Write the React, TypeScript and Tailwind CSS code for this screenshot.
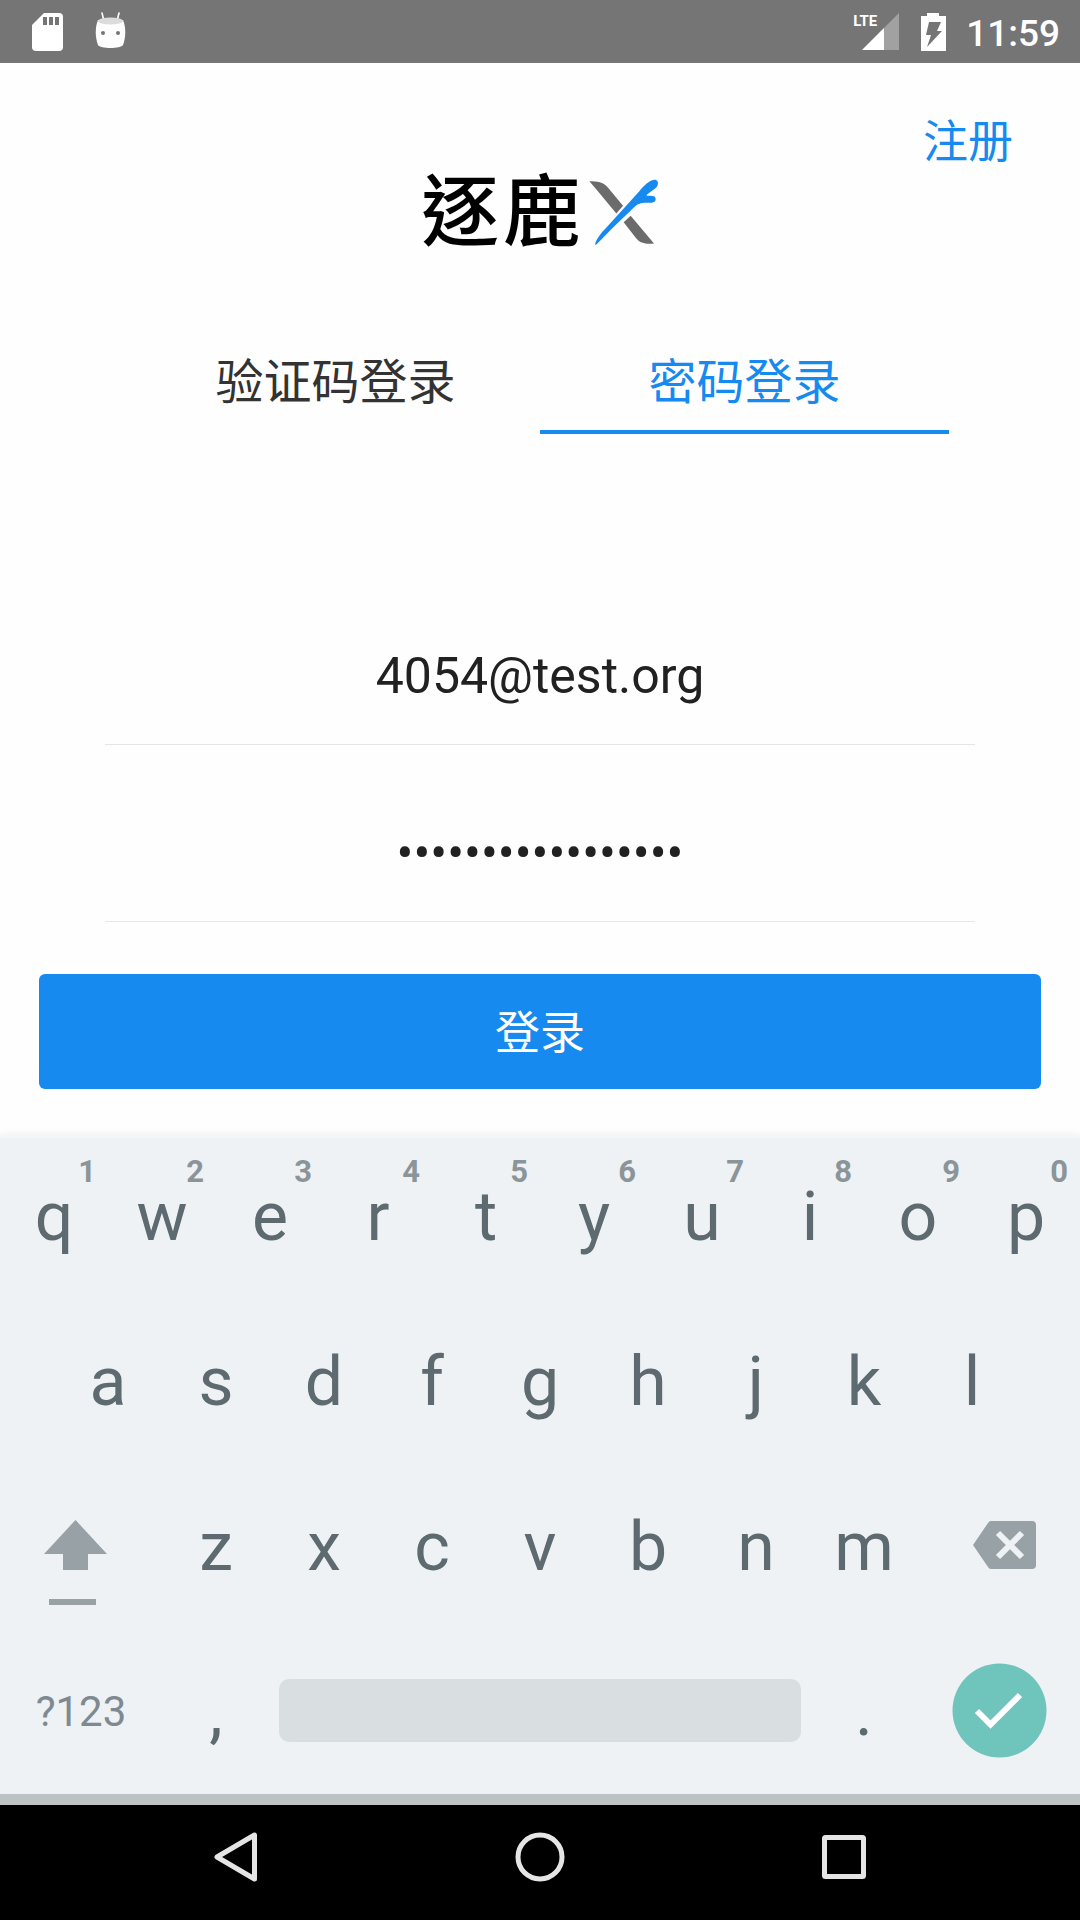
import React, { useState } from "react";

const cjk = "font-['Noto_Sans_CJK_SC',sans-serif]";

function StatusBar() {
  return (
    <header className="flex h-[63px] items-center justify-between bg-[#757575] pr-5 pl-8 text-white">
      <div className="flex items-center gap-8">
        <svg className="h-[38px] w-[31px]" viewBox="0 0 31 38" aria-label="SD card">
          <path fill="currentColor" d="M12 0h15a4 4 0 0 1 4 4v30a4 4 0 0 1-4 4H4a4 4 0 0 1-4-4V12z" />
          <path fill="#757575" d="M11 4h4v8h-4zM17 4h4v8h-4zM23 4h4v8h-4z" />
        </svg>
        <svg className="mb-1 h-9 w-[31px]" viewBox="0 0 31 36" aria-label="Android">
          <path stroke="currentColor" strokeWidth="1.6" strokeLinecap="round" d="M7 1l2 8M24 1l-2 8" />
          <path fill="currentColor" d="M3 8C0 15 0 25 3 33c2 4 23 4 25 0 3-8 3-18 0-25z" />
          <ellipse fill="#dcdcdc" cx="15.500" cy="9" rx="12.500" ry="3.500" />
          <circle fill="#757575" cx="8" cy="21" r="2" />
          <circle fill="#757575" cx="23" cy="21" r="2" />
        </svg>
      </div>
      <div className="flex items-center">
        <div className="relative h-[37px] w-[46px]">
          <svg className="absolute right-0 bottom-0 h-[37px] w-[37px]" viewBox="0 0 37 37" aria-label="Signal">
            <path fill="#a1a1a1" d="M37 0v37H0z" />
            <path fill="currentColor" d="M22 15v22H0z" />
          </svg>
          <span className="absolute top-0 left-0 text-[15px] leading-4 font-bold">LTE</span>
        </div>
        <svg className="ml-[22px] h-[38px] w-[25px]" viewBox="0 0 25 38" aria-label="Battery charging">
          <path fill="currentColor" d="M6 0h12v3h7v35H0V3h6z" />
          <path fill="#757575" d="M8 9h12l-4 9h5L6 34l4-12H5z" />
        </svg>
        <time className="mt-1 ml-5 text-[37px] leading-[44px] font-medium">11:59</time>
      </div>
    </header>
  );
}

function Logo() {
  return (
    <h1 className="flex items-center justify-center text-black">
      <span className="flex gap-1 font-['Noto_Sans_CJK_TC',sans-serif] text-[78px] leading-[80px] font-medium">
        <span>逐</span>
        <span>鹿</span>
      </span>
      <svg className="mt-[14px] ml-2 h-[67px] w-[70px]" viewBox="567 88 210 200" aria-label="X">
        <path fill="#6b6b6b" d="M568 94C592 94 609 96 623 112L669 168 649 191 590 120zM692 198L762 281C738 283 721 281 709 266L671 217z" />
        <path fill="#178aef" d="M585 284C588 270 600 252 620 232L718 124C732 107 748 92 762 90 772 89 776 97 773 106 768 118 750 124 739 137 750 140 768 134 767 148 766 160 752 159 738 159 722 159 714 162 704 171L640 232C622 250 600 273 588 285z" />
      </svg>
    </h1>
  );
}

const tabs = ["验证码登录", "密码登录"];

function LoginForm() {
  const [active, setActive] = useState(1);
  return (
    <main className="flex flex-1 flex-col pb-[46px]">
      <nav className="flex justify-end px-[67px] pt-[50px]">
        <a href="#register" className={`${cjk} text-[45px] leading-[52px] text-[#178aef]`}>注册</a>
      </nav>
      <Logo />
      <div role="tablist" className="mx-[131px] mt-[84px] grid grid-cols-2">
        {tabs.map((label, i) => (
          <button
            key={label}
            role="tab"
            aria-selected={i === active}
            onClick={() => setActive(i)}
            className={`${cjk} border-b-4 pt-4 pb-5 text-[48px] leading-[64px] ${
              i === active ? "border-[#178aef] text-[#178aef]" : "border-transparent text-[#333]"
            }`}
          >
            {label}
          </button>
        ))}
      </div>
      <form className="mt-auto flex flex-col px-[39px]" onSubmit={(e) => e.preventDefault()}>
        <div className="mx-[66px] flex flex-col gap-[39px] text-[50px] text-[#212121]">
          <input
            aria-label="账号"
            type="text"
            defaultValue="4054@test.org"
            className="h-[138px] w-full border-b border-[#e5e5e5] bg-transparent text-center outline-none"
          />
          <input
            aria-label="密码"
            type="password"
            defaultValue="abcdefghijklmnopq"
            className="h-[138px] w-full border-b border-[#e5e5e5] bg-transparent text-center outline-none"
          />
        </div>
        <button type="submit" className={`${cjk} mt-[52px] h-[115px] rounded-md bg-[#178aef] pb-1 text-[45px] text-white`}>
          登录
        </button>
      </form>
    </main>
  );
}

function Key({ label, hint, className = "col-span-2" }: { label: string; hint?: string; className?: string }) {
  return (
    <button type="button" className={`relative flex items-center justify-center ${className}`}>
      {label}
      {hint && (
        <span className="absolute top-[19px] right-3 text-[31px] leading-9 font-bold text-[#8b9599]">{hint}</span>
      )}
    </button>
  );
}

function Keyboard() {
  return (
    <section
      aria-label="Keyboard"
      className="grid h-[659px] grid-cols-20 grid-rows-4 bg-[#eef2f5] text-[68px] leading-20 text-[#5d6a6f] shadow-[0_0_8px_rgba(0,0,0,0.08),inset_0_3px_0_#f5f6f7]"
    >
      {"qwertyuiop".split("").map((k, i) => (
        <Key key={k} label={k} hint={String((i + 1) % 10)} />
      ))}
      {"asdfghjkl".split("").map((k) => (
        <Key key={k} label={k} className={k === "a" ? "col-span-2 col-start-2" : "col-span-2"} />
      ))}
      <button type="button" aria-label="Shift" className="col-span-3 col-start-1 flex items-center justify-start pl-11">
        <svg className="mt-8 h-[85px] w-[63px]" viewBox="0 0 63 85">
          <path fill="#98a1a6" d="M31.500 0L63 34H44v16H19V34H0zM5 79h47v6H5z" />
        </svg>
      </button>
      {"zxcvbnm".split("").map((k) => (
        <Key key={k} label={k} />
      ))}
      <button type="button" aria-label="Backspace" className="col-span-3 flex items-center justify-end pr-11 pb-1">
        <svg className="h-12 w-[63px]" viewBox="0 0 63 48">
          <path fill="#98a1a6" d="M18 0h41a4 4 0 0 1 4 4v40a4 4 0 0 1-4 4H18a4 4 0 0 1-3-2L0 24 15 2a4 4 0 0 1 3-2z" />
          <path stroke="#eef2f5" strokeWidth="6" d="M25 12l24 24M49 12L25 36" />
        </svg>
      </button>
      <button type="button" className="col-span-3 text-[42px] text-[#7e8a8f]">?123</button>
      <Key label="," />
      <button type="button" aria-label="Space" className="col-span-10 flex items-center px-[9px] pb-0.5">
        <span className="h-[63px] w-full rounded-[10px] bg-[#d9dee1]" />
      </button>
      <Key label="." />
      <button type="button" aria-label="Done" className="col-span-3 flex items-center justify-center pb-0.5">
        <svg className="h-[95px] w-[95px]" viewBox="0 0 95 95">
          <circle fill="#6fc4bc" cx="47.500" cy="47.500" r="47" />
          <path fill="none" stroke="#fff" strokeWidth="6" d="M25 48l13.500 13.500L68 32" />
        </svg>
      </button>
    </section>
  );
}

function NavBar() {
  return (
    <footer className="border-t-[11px] border-[#bdc2c5] bg-black">
      <div className="flex h-[115px] items-center px-[84px] pb-3 text-[#e5e5e5] [&>button]:flex [&>button]:flex-1 [&>button]:justify-center">
        <button type="button" aria-label="Back">
          <svg className="h-[50px] w-[50px]" viewBox="0 0 50 50">
            <path fill="none" stroke="currentColor" strokeWidth="5" strokeLinejoin="round" d="M43.500 3v44L6 25z" />
          </svg>
        </button>
        <button type="button" aria-label="Home">
          <svg className="h-[50px] w-[50px]" viewBox="0 0 50 50">
            <circle fill="none" stroke="currentColor" strokeWidth="5" cx="25" cy="25" r="22" />
          </svg>
        </button>
        <button type="button" aria-label="Recents">
          <svg className="h-[50px] w-[50px]" viewBox="0 0 50 50">
            <rect fill="none" stroke="currentColor" strokeWidth="5" strokeLinejoin="round" x="5.500" y="5.500" width="39" height="39" rx="1" />
          </svg>
        </button>
      </div>
    </footer>
  );
}

export default function App() {
  return (
    <div className="flex min-h-screen flex-col bg-[#fefefe] font-[Roboto,sans-serif]">
      <StatusBar />
      <LoginForm />
      <Keyboard />
      <NavBar />
    </div>
  );
}
